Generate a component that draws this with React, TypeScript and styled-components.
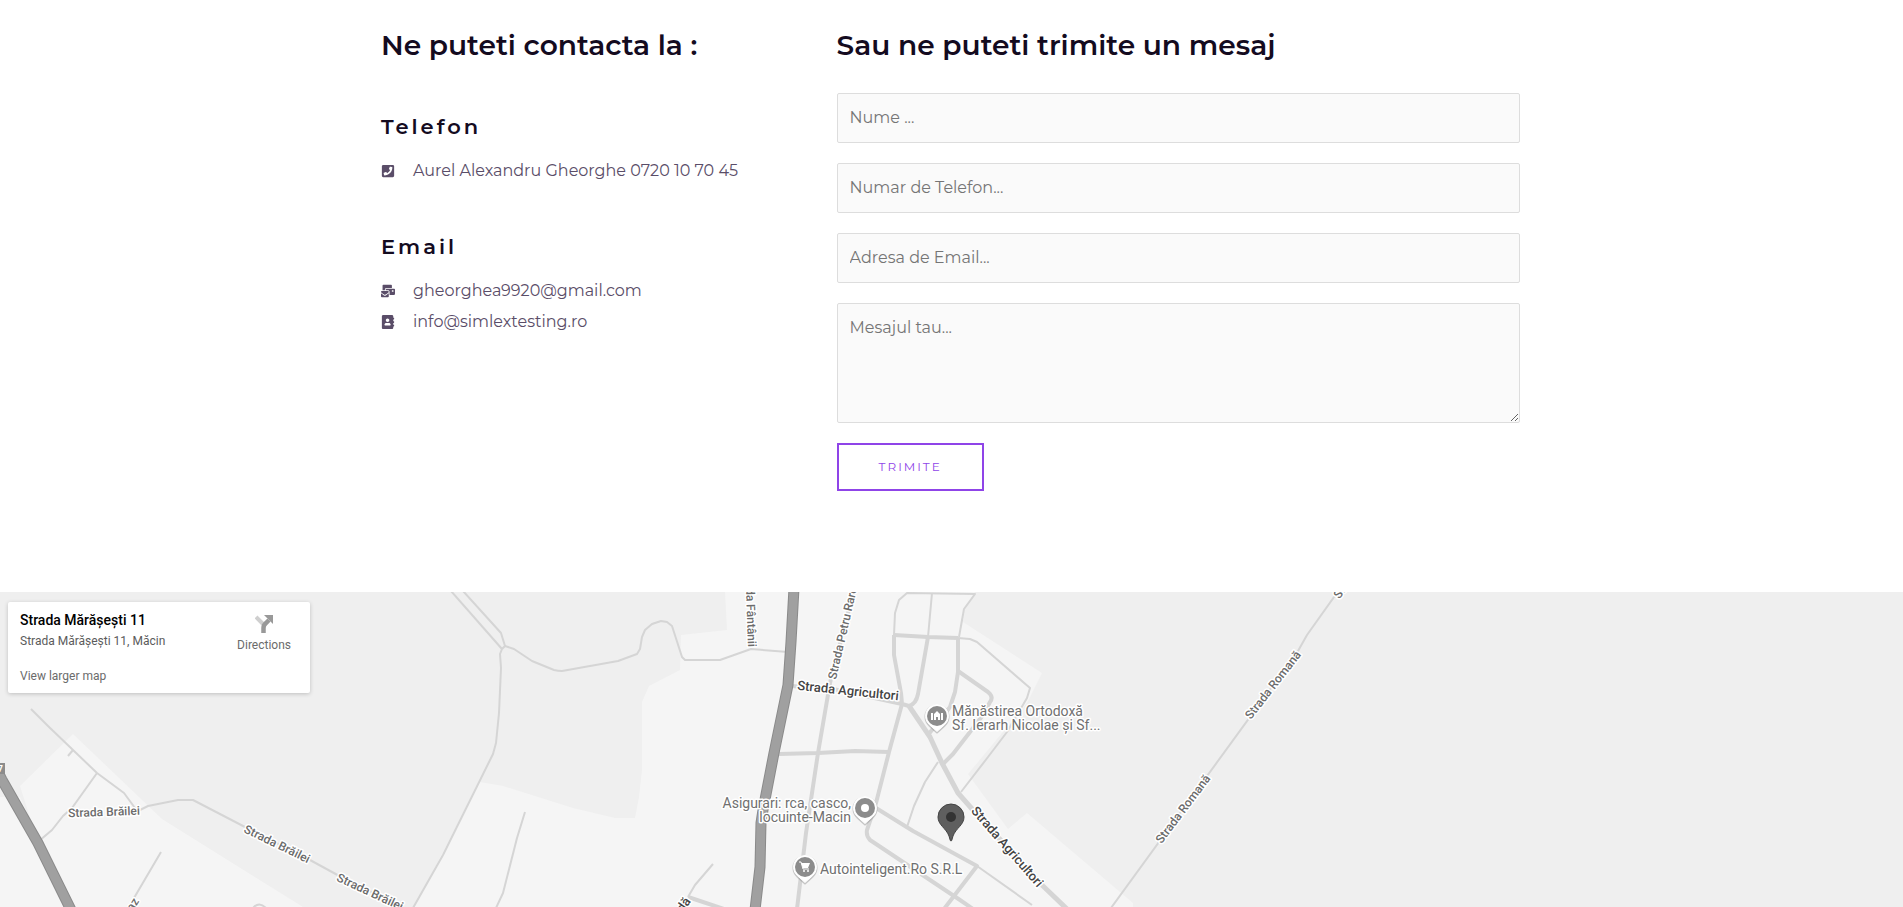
import React, { useId } from "react";
import styled, { createGlobalStyle, css } from "styled-components";
import { FaPhoneSquare, FaMailBulk } from "react-icons/fa";

const GlobalStyle = createGlobalStyle`
  *, *::before, *::after { box-sizing: border-box; }
  body {
    margin: 0;
    background: #fff;
    color: #5a4d68;
    font-family: Montserrat, Inter, "Open Sans", sans-serif;
    font-size: 16px;
    line-height: 26px;
  }
`;

const Container = styled.section`
  display: grid;
  grid-template-columns: 2fr 3fr;
  width: 100%;
  max-width: 1141px;
  margin: 0 auto;
  padding: 24px 2px 101px 0;

  @media (max-width: 900px) {
    grid-template-columns: 1fr;
    row-gap: 40px;
    padding: 24px 20px 60px;
  }
`;

const Column = styled.div`
  min-width: 0;
`;

const Heading = styled.h2`
  margin: 0;
  color: #140b1f;
  font-size: 28px;
  font-weight: 600;
  line-height: 42px;
`;

const Group = styled.div`
  margin-top: 46px;
  padding-bottom: 2px;
`;

const SubHeading = styled.h3`
  margin: 0 0 16px;
  color: #140b1f;
  font-size: 21px;
  font-weight: 600;
  line-height: 30px;
  letter-spacing: 3px;
`;

const List = styled.ul`
  display: flex;
  flex-direction: column;
  gap: 5px;
  margin: 0;
  padding: 0;
  list-style: none;
`;

const Item = styled.li`
  display: flex;
  align-items: center;
  gap: 18px;

  svg { flex: none; width: 14px; height: 14px; }
`;

const ContactLink = styled.a`
  color: inherit;
  text-decoration: none;
`;

const Form = styled.form`
  display: flex;
  flex-direction: column;
  align-items: flex-start;
  gap: 20px;
  margin-top: 27px;
`;

const fieldStyle = css`
  display: block;
  width: 100%;
  border: 1px solid #ddd;
  border-radius: 2px;
  background: #fafafa;
  color: #666;
  font: inherit;

  &::placeholder { color: #757575; opacity: 1; }
`;

const Input = styled.input`
  ${fieldStyle}
  height: 50px;
  padding: 10px 12px 12px;
`;

const TextArea = styled.textarea`
  ${fieldStyle}
  height: 120px;
  padding: 11px 12px;
  resize: vertical;
`;

const Submit = styled.button`
  padding: 12px 40px;
  border: 2px solid #8f44e8;
  background: transparent;
  color: #8f44e8;
  font-family: inherit;
  font-size: 12px;
  line-height: 20px;
  letter-spacing: 2px;
  text-transform: uppercase;
  cursor: pointer;
`;

const MapSection = styled.section`
  position: relative;
  height: 315px;
  overflow: hidden;
  background: #efefef;
  font-family: Roboto, sans-serif;
`;

const MapCanvas = styled.svg`
  display: block;
  width: 100%;
  height: 100%;
`;

const PlaceCard = styled.div`
  position: absolute;
  top: 10px;
  left: 8px;
  display: flex;
  justify-content: space-between;
  width: 302px;
  padding: 9px 19px 9px 12px;
  border-radius: 2px;
  background: #fff;
  box-shadow: 0 1px 4px rgba(0, 0, 0, 0.2);
  font-size: 12px;
  line-height: 16px;
`;

const PlaceInfo = styled.div`
  display: flex;
  flex-direction: column;
  align-items: flex-start;
  color: #5b5b5b;
`;

const PlaceName = styled.strong`
  color: #000;
  font-size: 14px;
  font-weight: 500;
  line-height: 18px;
`;

const Address = styled.span`
  margin: 4px 0 19px;
`;

const CardLink = styled.a<{ $stacked?: boolean }>`
  color: #6b6b6b;
  text-decoration: none;
  ${({ $stacked }) => $stacked && css`
    display: flex;
    flex-direction: column;
    align-items: center;
    align-self: flex-start;
    gap: 4px;
    padding-top: 4px;
  `}
`;

const Road = styled.path<{ $width?: number }>`
  fill: none;
  stroke: #d5d5d5;
  stroke-width: ${({ $width = 2 }) => $width};
  stroke-linejoin: round;
`;

const Land = styled.path`
  fill: #f5f5f5;
`;

const StreetText = styled.text<{ $main?: boolean }>`
  fill: ${({ $main }) => ($main ? "#444" : "#6b6b6b")};
  font-size: ${({ $main }) => ($main ? 13 : 12)}px;
  font-weight: 500;
  paint-order: stroke;
  stroke: #fff;
  stroke-width: 3px;
  stroke-linejoin: round;
`;

const PoiText = styled.text`
  fill: #707070;
  font-size: 14px;
  paint-order: stroke;
  stroke: #fff;
  stroke-width: 3px;
  stroke-linejoin: round;
`;

type StreetProps = { x: number; y: number; angle: number; anchor?: "start" | "middle" | "end"; main?: boolean; children: string };

function Street({ x, y, angle, anchor = "middle", main, children }: StreetProps) {
  return (
    <StreetText $main={main} textAnchor={anchor} dy="4" transform={`translate(${x} ${y}) rotate(${angle})`}>
      {children}
    </StreetText>
  );
}

const markerShape = "M0 15.500 L-7.500 8.700 A11.500 11.500 0 1 1 7.500 8.700 Z";

function Marker({ x, y, children }: { x: number; y: number; children: React.ReactNode }) {
  return (
    <g transform={`translate(${x} ${y})`}>
      <path d={markerShape} transform="translate(0 1)" fill="#999" stroke="#999" strokeWidth="2" strokeLinejoin="round" opacity="0.5" />
      <path d={markerShape} fill="#fff" stroke="#fff" strokeLinejoin="round" />
      <circle r="10" fill="#8c8c8c" />
      {children}
    </g>
  );
}

const highways = [
  "M-8 168 L2 188 L38 251 L71 318",
  "M794 -4 L791 50 L788 93 L774 161 L763 218 L761 231 L760 275 L755 318",
];

const lanes = [
  "M31 117 L48 134 L73 158 L97 181 L124 201 L135 216 L140 218 L148 214 L178 208 L193 208 L245 235 L310 268 L343 286 L404 316",
  "M73 158 L68 164",
  "M97 181 L72 216 L63 224 L52 238 L39 249",
  "M161 260 L134 306 L128 316",
  "M253 316 Q259 309 266 316",
  "M451 -1 L502 57",
  "M463 -1 L501 41 L505 54 L502 57",
  "M505 54 L514 57 L532 69 L554 78 Q558 79 562 79 L618 69 L637 62 L640 57 L642 45 L645 38 L652 32 L661 29 L667 30 L672 34 L682 65 L685 68 L720 68 L751 57 L788 60",
  "M502 57 L500 62 L501 76 L499 121 L496 151 L493 162 L443 263 L413 316",
  "M525 220 L517 246 L503 301 L496 316",
  "M713 272 L695 293 L688 305",
  "M894 43 L895 21 L899 8 L907 1 L975 2 L964 17 L959 45",
  "M932 1 L928 45",
  "M958 46 L970 47 L977 50 L1030 96 L1027 106 L1007 140 L988 165 L961 200",
  "M938 170 L925 190 L914 214 L907 235",
  "M977 274 L1032 313",
  "M1339 -2 L1307 43 L1298 59 L1111 316",
];

const streets = [
  "M688 305 L700 309 L724 317",
  "M854 -2 L830 91 L818 161 L806 241 L797 317",
  "M779 162 L818 161 L855 159 L889 160",
  "M902 112 L889 160 L876 211 L867 238 Q866 244 870 248 L960 308 L973 317",
  "M876 216 L913 239 L977 274 L944 317",
  "M894 43 L928 45 L958 46",
  "M894 43 L894 63 L901 101 L902 112 L909 114",
  "M928 45 L918 102 Q916 112 909 114",
  "M958 46 L958 80 L955 100 L950 115 L928 143",
  "M958 79 L988 100 Q994 105 990 110 L983 123 L970 140 L953 162 L943 172",
  "M791 94 L833 97 L902 112",
];

function TownMap() {
  const titleId = useId();
  return (
    <MapCanvas viewBox="0 0 1903 315" preserveAspectRatio="xMidYMid slice" role="img" aria-labelledby={titleId}>
      <title id={titleId}>Strada Mărășești 11, Măcin</title>
      <Land d="M73 142 L20 194 L38 251 L73 315 H303 L162 227 Z" />
      <Land d="M0 205 V315 H70 L20 205 Z" />
      <Land d="M725 0 L727 38 L681 43 L680 78 L649 94 L642 110 L642 178 L639 205 L635 226 L615 226 L573 216 L503 194 L480 190 L414 315 H1133 V311 L1027 221 L1008 237 L968 182 L1027 111 L1042 81 L963 30 L965 17 L975 0 Z" />
      {lanes.map((d) => <Road key={d} d={d} />)}
      {streets.map((d) => <Road key={d} d={d} $width={4} />)}
      <Road $width={5} d="M909 114 L930 145 L942 171 L958 201 L973 218 L1043 294 L1067 317" />
      {highways.map((d) => (
        <g key={d} fill="none">
          <path d={d} stroke="#8a8a8a" strokeWidth="11" />
          <path d={d} stroke="#a0a0a0" strokeWidth="9" />
        </g>
      ))}
      <rect x="-12" y="171" width="17" height="11" fill="#8c8c8c" />
      <text x="3" y="180" textAnchor="end" fill="#fff" fontSize="9" fontWeight="700">7</text>

      <Street x={104} y={220} angle={-2}>Strada Brăilei</Street>
      <Street x={277} y={252} angle={26}>Strada Brăilei</Street>
      <Street x={370} y={300} angle={25}>Strada Brăilei</Street>
      <Street x={136} y={307} angle={-58} anchor="end">Strada Viteaz</Street>
      <Street x={752} y={55} angle={88} anchor="end">Strada Fântânii</Street>
      <Street x={832} y={87} angle={-77} anchor="start">Strada Petru Rareș</Street>
      <Street x={848} y={99} angle={6} main>Strada Agricultori</Street>
      <Street x={1007} y={255} angle={49} main>Strada Agricultori</Street>
      <Street x={688} y={307} angle={-55} anchor="end" main>Strada Livadă</Street>
      <Street x={1273} y={93} angle={-52}>Strada Romană</Street>
      <Street x={1183} y={217} angle={-53}>Strada Romană</Street>
      <Street x={1336} y={5} angle={-52} anchor="start">Strada Romană</Street>

      <PoiText x="952" y="124">Mănăstirea Ortodoxă</PoiText>
      <PoiText x="952" y="138">Sf. Ierarh Nicolae și Sf...</PoiText>
      <PoiText x="851" y="216" textAnchor="end">Asigurari: rca, casco,</PoiText>
      <PoiText x="851" y="230" textAnchor="end">locuinte-Macin</PoiText>
      <PoiText x="820" y="282">Autointeligent.Ro S.R.L</PoiText>

      <Marker x={937} y={124}>
        <path d="M-6 4 V-3 H-4 V4 Z M4 4 V-3 H6 V4 Z M-3 4 V-2 L0 -5 L3 -2 V4 H1 V1 H-1 V4 Z" fill="#fff" />
      </Marker>
      <Marker x={865} y={216}>
        <circle r="4" fill="#fff" />
      </Marker>
      <Marker x={805} y={275}>
        <path d="M-6 -5 H-4 L-2 2 H4" fill="none" stroke="#fff" strokeWidth="1" />
        <path d="M-4 -4 H5 L3 1 H-2 Z" fill="#fff" />
        <circle cx="-1" cy="4" r="1" fill="#fff" />
        <circle cx="3" cy="4" r="1" fill="#fff" />
      </Marker>

      <g transform="translate(951 225)">
        <path d="M0 24 C-1 24 -1 22 -2 19 C-5 11 -13 8 -13 0 A13 13 0 0 1 13 0 C13 8 5 11 2 19 C1 22 1 24 0 24Z" fill="#5f5f5f" stroke="#444" strokeWidth="1" />
        <circle r="5" fill="#333" />
      </g>
    </MapCanvas>
  );
}

function AddressBookIcon() {
  return (
    <svg viewBox="0 0 448 512" fill="currentColor" aria-hidden="true">
      <path d="M436 160c6.600 0 12-5.400 12-12v-40c0-6.600-5.400-12-12-12h-20V48c0-26.500-21.500-48-48-48H48C21.500 0 0 21.500 0 48v416c0 26.500 21.500 48 48 48h320c26.500 0 48-21.500 48-48v-48h20c6.600 0 12-5.400 12-12v-40c0-6.600-5.400-12-12-12h-20v-64h20c6.600 0 12-5.400 12-12v-40c0-6.600-5.400-12-12-12h-20v-64h20zm-228-32c35.300 0 64 28.700 64 64s-28.700 64-64 64-64-28.700-64-64 28.700-64 64-64zm112 236.800c0 10.600-10 19.200-22.400 19.200H118.400C106 384 96 375.400 96 364.800v-19.200c0-31.800 30.100-57.600 67.200-57.600h5c12.300 5.100 25.700 8 39.800 8s27.600-2.900 39.800-8h5c37.100 0 67.200 25.800 67.200 57.600v19.200z" />
    </svg>
  );
}

function DirectionsIcon() {
  return (
    <svg width="18" height="18" viewBox="0 0 18 18" aria-hidden="true">
      <path d="M1 2 L8 9" stroke="#cfcfcf" strokeWidth="4" />
      <path d="M8.500 18 V13 Q8.500 10 11 8 L14 5" fill="none" stroke="#999" strokeWidth="4.500" />
      <path d="M9 0 H18 V9 Z" fill="#999" />
    </svg>
  );
}

export default function App() {
  return (
    <>
      <GlobalStyle />
      <main>
        <Container>
          <Column>
            <Heading>Ne puteti contacta la :</Heading>
            <Group>
              <SubHeading>Telefon</SubHeading>
              <List>
                <Item><FaPhoneSquare aria-hidden /><span>Aurel Alexandru Gheorghe 0720 10 70 45</span></Item>
              </List>
            </Group>
            <Group>
              <SubHeading>Email</SubHeading>
              <List>
                <Item><FaMailBulk aria-hidden /><ContactLink href="mailto:gheorghea9920@gmail.com">gheorghea9920@gmail.com</ContactLink></Item>
                <Item><AddressBookIcon /><ContactLink href="mailto:info@simlextesting.ro">info@simlextesting.ro</ContactLink></Item>
              </List>
            </Group>
          </Column>
          <Column>
            <Heading>Sau ne puteti trimite un mesaj</Heading>
            <Form onSubmit={(event) => event.preventDefault()}>
              <Input type="text" name="name" aria-label="Nume" placeholder="Nume ..." />
              <Input type="tel" name="phone" aria-label="Numar de Telefon" placeholder="Numar de Telefon..." />
              <Input type="email" name="email" aria-label="Adresa de Email" placeholder="Adresa de Email..." />
              <TextArea name="message" aria-label="Mesajul tau" placeholder="Mesajul tau..." />
              <Submit type="submit">Trimite</Submit>
            </Form>
          </Column>
        </Container>
        <MapSection>
          <TownMap />
          <PlaceCard>
            <PlaceInfo>
              <PlaceName>Strada Mărășești 11</PlaceName>
              <Address>Strada Mărășești 11, Măcin</Address>
              <CardLink href="#map">View larger map</CardLink>
            </PlaceInfo>
            <CardLink href="#directions" $stacked><DirectionsIcon />Directions</CardLink>
          </PlaceCard>
        </MapSection>
      </main>
    </>
  );
}
